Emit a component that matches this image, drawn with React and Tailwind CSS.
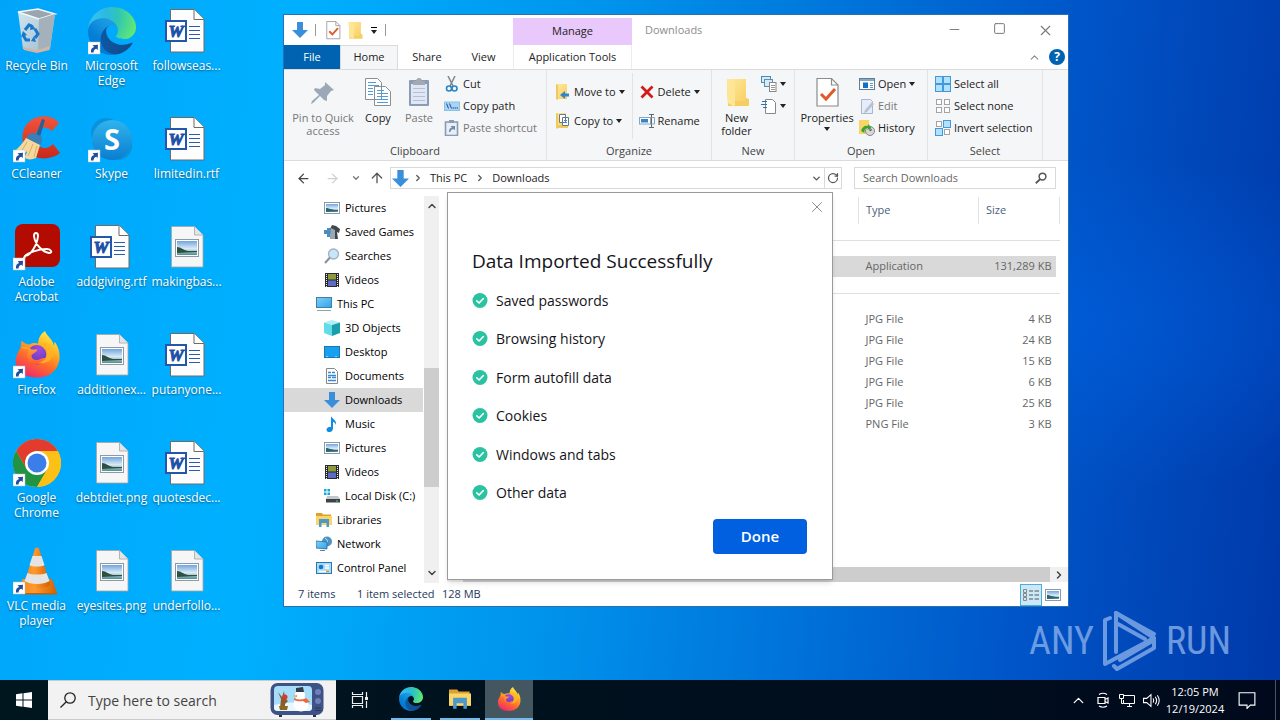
import React from 'react';
import { ChevronDown, ChevronUp, ChevronRight, ArrowLeft, ArrowRight, ArrowUp, RotateCw, Minus, Square, X } from 'lucide-react';

// Gradients shared by all the icons
function Defs() {
  return (
    <svg className="absolute w-0 h-0" aria-hidden="true">
      <defs>
        <linearGradient id="edgeA" x1="60" y1="170" x2="240" y2="170" gradientUnits="userSpaceOnUse">
          <stop offset="0" stopColor="#0c59a4" /><stop offset="1" stopColor="#114a8b" />
        </linearGradient>
        <linearGradient id="edgeB" x1="155" y1="100" x2="45" y2="220" gradientUnits="userSpaceOnUse">
          <stop offset="0" stopColor="#1b9de2" /><stop offset=".3" stopColor="#1595df" /><stop offset=".7" stopColor="#0680d7" /><stop offset="1" stopColor="#0078d4" />
        </linearGradient>
        <radialGradient id="edgeC" cx="30" cy="45" r="240" gradientUnits="userSpaceOnUse">
          <stop offset="0" stopColor="#35c1f1" /><stop offset=".3" stopColor="#2bb9e0" /><stop offset=".55" stopColor="#2fc6b4" /><stop offset="1" stopColor="#66eb6e" />
        </radialGradient>
        <linearGradient id="ffBody" x1=".8" y1="0" x2=".3" y2="1">
          <stop offset="0" stopColor="#fff14f" /><stop offset=".35" stopColor="#ffb01f" /><stop offset=".65" stopColor="#ff6a2b" /><stop offset="1" stopColor="#f0286e" />
        </linearGradient>
        <radialGradient id="ffGlobe" cx=".6" cy=".2" r=".9">
          <stop offset="0" stopColor="#a04be0" /><stop offset="1" stopColor="#5a36b8" />
        </radialGradient>
        <linearGradient id="ffFox" x1="0" y1="0" x2="0" y2="1">
          <stop offset="0" stopColor="#ffa530" /><stop offset="1" stopColor="#ff5b2e" />
        </linearGradient>
        <linearGradient id="skype" x1="0" y1="0" x2="0" y2="1">
          <stop offset="0" stopColor="#2fb4ee" /><stop offset="1" stopColor="#0a7ed0" />
        </linearGradient>
        <linearGradient id="photo" x1="0" y1="0" x2="0" y2="1">
          <stop offset="0" stopColor="#6fa6de" /><stop offset=".55" stopColor="#dbeaf5" /><stop offset="1" stopColor="#4f8c93" />
        </linearGradient>
        <linearGradient id="bin" x1="0" y1="0" x2="1" y2="1">
          <stop offset="0" stopColor="#e8edf0" /><stop offset="1" stopColor="#b4bec6" />
        </linearGradient>
        <linearGradient id="ccRed" x1="0" y1="0" x2="0" y2="1">
          <stop offset="0" stopColor="#f0553c" /><stop offset="1" stopColor="#c8281a" />
        </linearGradient>
        <linearGradient id="cone" x1="0" y1="0" x2="1" y2="0">
          <stop offset="0" stopColor="#f58a1a" /><stop offset=".4" stopColor="#ff9a2e" /><stop offset="1" stopColor="#d45f00" />
        </linearGradient>
        <linearGradient id="folder" x1="0" y1="0" x2="1" y2="1">
          <stop offset="0" stopColor="#ffe9a0" /><stop offset="1" stopColor="#f8cf60" />
        </linearGradient>
        <linearGradient id="screen" x1="0" y1="0" x2="1" y2="1">
          <stop offset="0" stopColor="#7fd0f7" /><stop offset="1" stopColor="#2fa4e8" />
        </linearGradient>
      </defs>
    </svg>
  );
}

function Icon({ size = 16, box = 16, children }) {
  return (
    <svg width={size} height={size} viewBox={`0 0 ${box} ${box}`} fill="none" className="shrink-0" aria-hidden="true">
      {children}
    </svg>
  );
}

const Shortcut = () => (
  <g>
    <rect x="0" y="35" width="12" height="12" fill="#fff" stroke="#b8c4cc" strokeWidth=".5" />
    <path d="M3 45.500c-.4-3.200.8-5 3.200-5.600L4.600 38.200l5.400-.5-.3 5.400-1.500-1.400c-1.700.6-2.600 1.800-2.700 3.800z" fill="#1f4e9a" />
  </g>
);

const RecycleBin = () => (
  <Icon size={48} box={48}>
    <path d="M5 5l20-3 17 5-5 35-13 3-14-3z" fill="url(#bin)" opacity=".9" />
    <path d="M5 5l20-3 17 5-16 5z" fill="#9aa6af" stroke="#f4f7f8" strokeWidth="1.500" />
    <path d="M26 12l16-5-5 34-12 4z" fill="#a4b0ba" />
    <path d="M10 40l14 3 13-4-.5 4L24 46l-13-3z" fill="#d0b6a6" />
    <g stroke="#1878cc" strokeWidth="3">
      <path d="M12 23l4-5 4 2M22 22l3 5-3 4M17 33h-4l-3-5" />
    </g>
    <path d="M18 17l5 5-6 1zM23 35l-5-1 3-5zM8 30l2-6 4 4z" fill="#1878cc" />
  </Icon>
);

const EdgeArt = () => (
  <g>
    <path d="M231.400 190.500c-3.400 1.800-6.900 3.400-10.500 4.700-11.500 4.300-23.600 6.500-35.900 6.500-47.300 0-88.500-32.500-88.500-74.300.1-11.400 6.400-21.900 16.400-27.300-42.800 1.800-53.800 46.400-53.800 72.500 0 73.900 68.100 81.400 82.800 81.400 7.900 0 19.800-2.300 27-4.600l1.300-.4c27.600-9.500 51-28.100 66.600-52.800 1.200-1.900.6-4.300-1.200-5.500-1.300-.8-2.900-.9-4.200-.2z" fill="url(#edgeA)" />
    <path d="M105.700 241.400c-8.900-5.500-16.600-12.800-22.700-21.300-26.300-36-18.400-86.500 17.600-112.800 3.800-2.700 7.700-5.200 11.900-7.200 3.100-1.500 8.400-4.100 15.500-4 10.100.1 19.600 4.900 25.700 13 4 5.400 6.300 11.900 6.400 18.700 0-.2 24.500-79.600-80-79.600-43.900 0-80 41.700-80 78.200-.2 19.300 4 38.500 12.100 56 27.600 58.800 94.800 87.600 156.400 67.100-21.100 6.600-44.100 3.700-62.900-8.100z" fill="url(#edgeB)" />
    <path d="M152.300 148.900c-.8 1-3.300 2.500-3.300 5.700 0 2.600 1.700 5.100 4.700 7.200 14.400 10 41.500 8.700 41.600 8.700 10.700 0 21.100-2.900 30.300-8.300 18.800-11 30.400-31.100 30.400-52.900.3-22.400-8-37.300-11.300-43.900C223.500 23.900 177.700 0 128 0 58 0 1 56.200 0 126.200c.5-36.500 36.800-66 80-66 3.500 0 23.500.3 42 10.100 16.300 8.600 24.900 18.900 30.800 29.200 6.200 10.700 7.300 24.100 7.300 29.500 0 5.300-2.700 13.300-7.800 19.900z" fill="url(#edgeC)" />
  </g>
);

const Edge = () => (
  <Icon size={48} box={48}>
    <g transform="scale(.1875)"><EdgeArt /></g>
    <Shortcut />
  </Icon>
);

const FirefoxArt = () => (
  <g>
    <path d="M8 10c-1 3-1 5-1 7-4 6-6 11-5 17 1 8 9 14 22 14 13 0 23-8 23-22 0-7-3-12-5-15-1 2 0 3-1 4-1-7-7-9-9-15-6 4-7 9-7 13-3-1-7-1-9 1-3 0-6-2-8-4z" fill="url(#ffBody)" />
    <circle cx="23.500" cy="24.500" r="10" fill="url(#ffGlobe)" />
    <path d="M7 17c5-1 9 0 11 2h6c0 3-5 4-6 6 0 3 2 5 5 5 4 0 6-3 9-2-2 6-9 8-14 5-6-3-5-11-3-14-3 0-6-1-8-2z" fill="url(#ffFox)" />
    <path d="M25 13c4-1 9 2 9 8 0 7-4 11-9 12 9 2 16-4 16-12-1-6-5-9-9-9-3 0-5 0-7 1z" fill="#ffb727" opacity=".75" />
  </g>
);

const Firefox = () => (
  <Icon size={48} box={48}>
    <g transform="translate(1 0) scale(.97)"><FirefoxArt /></g>
    <Shortcut />
  </Icon>
);

const CCleaner = () => (
  <Icon size={48} box={48}>
    <path d="M46 8C40 0 26-1 17 6 8 13 7 27 14 36c7 9 23 10 33 2L40 29c-5 5-11 5-15 1-4-5-4-11 0-15 4-4 10-3 14 1z" fill="url(#ccRed)" />
    <path d="M29 4l3 1-6 20-4-2z" fill="#2b5f94" />
    <path d="M20 18l8 3c2 2 1 7-1 9l-14-6c1-3 4-6 7-6z" fill="#3b7eb8" />
    <path d="M13 23l14 7-4 13c-5 2-9 2-12-1 2-2 3-4 3-6-3 4-7 3-12 0 4-4 8-8 11-13z" fill="#f6d89c" />
    <path d="M14 27l-6 10M20 29l-5 12M24 31l-3 11" stroke="#d8ad66" />
    <Shortcut />
  </Icon>
);

const Skype = () => (
  <Icon size={48} box={48}>
    <circle cx="18" cy="18" r="15" fill="#0a92dc" />
    <circle cx="30" cy="31" r="14" fill="#0a92dc" />
    <circle cx="24" cy="25" r="20" fill="url(#skype)" />
    <text x="24" y="35" textAnchor="middle" fontSize="29" fontWeight="700" fontFamily="Open Sans, sans-serif" fill="#fff">S</text>
    <Shortcut />
  </Icon>
);

const Acrobat = () => (
  <Icon size={48} box={48}>
    <rect x="2" y="1" width="45" height="43" rx="8" fill="#b30b00" />
    <path d="M12 33c5 0 12-10 13-20 0-4-4-4-4 0 1 9 9 16 15 17 4 0 2-4-2-4-9 0-19 4-22 7-2 3-1 4 0 0z" stroke="#fff" strokeWidth="2" strokeLinejoin="round" />
    <Shortcut />
  </Icon>
);

const Chrome = () => (
  <Icon size={48} box={48}>
    <circle cx="24" cy="24" r="24" fill="#fbc116" />
    <path d="M3.200 12A24 24 0 0 1 44.800 12H24L13.600 30z" fill="#e33b2e" />
    <path d="M3.200 12A24 24 0 0 0 24 48L34.400 30 24 36 13.600 30z" fill="#229342" />
    <path d="M24 12h20.800A24 24 0 0 1 24 48l10.400-18z" fill="#fbc116" />
    <circle cx="24" cy="24" r="12" fill="#fff" />
    <circle cx="24" cy="24" r="9.500" fill="#3b7de9" />
    <Shortcut />
  </Icon>
);

const Vlc = () => (
  <Icon size={48} box={48}>
    <path d="M9 32h30l5 14H7z" fill="url(#cone)" />
    <path d="M7 46l1 1.500h36V46z" fill="#c65f08" />
    <path d="M22 1.500c1-1.500 3-1.500 4 0l11 36c-3 5-23 5-26 0z" fill="url(#cone)" />
    <path d="M19.500 9h9l3 9c-3 2-12 2-15 0zM14.500 26c5 2 14 2 19 0l3 8c-6 4-19 4-25 0z" fill="#e6e4e2" />
    <Shortcut />
  </Icon>
);

const WordDoc = () => (
  <Icon size={48} box={48}>
    <path d="M7.500 2.500h24l9.500 10v32.500H7.500z" fill="#fdfdfd" stroke="#6e6a68" />
    <path d="M31 2.500v10h10" fill="#fff" stroke="#6e6a68" />
    <path d="M26 19.500h11M26 23.500h11M26 27.500h11M26 31.500h11" stroke="#2b5cad" />
    <rect x="3" y="14" width="20" height="20" fill="#fff" stroke="#2456ac" strokeWidth="2" />
    <text x="13" y="30" textAnchor="middle" fontSize="17" fontWeight="700" fontStyle="italic" fontFamily="Liberation Serif, serif" fill="#1f50a8" stroke="#1f50a8">W</text>
  </Icon>
);

const ImageDoc = () => (
  <Icon size={48} box={48}>
    <path d="M8.500 3.500h23l8.500 8.500v32H8.500z" fill="#f6f6f6" stroke="#a9a5a2" strokeWidth=".8" />
    <path d="M31.500 3.500V12H40" fill="#dfe6ea" stroke="#a9a5a2" strokeWidth=".8" />
    <rect x="12.500" y="16.500" width="23" height="17" fill="#fff" stroke="#8b9aa5" />
    <rect x="14" y="18" width="20" height="14" fill="url(#photo)" />
    <path d="M14 24c4 0 6 3 11 4h9v1c-8 0-14 1-20 1z" fill="#2c5140" />
  </Icon>
);

const desktopItems = [
  { label: 'Recycle Bin', icon: RecycleBin },
  { label: 'CCleaner', icon: CCleaner },
  { label: 'Adobe Acrobat', icon: Acrobat },
  { label: 'Firefox', icon: Firefox },
  { label: 'Google Chrome', icon: Chrome },
  { label: 'VLC media player', icon: Vlc },
  { label: 'Microsoft Edge', icon: Edge },
  { label: 'Skype', icon: Skype },
  { label: 'addgiving.rtf', icon: WordDoc },
  { label: 'additionex...', icon: ImageDoc },
  { label: 'debtdiet.png', icon: ImageDoc },
  { label: 'eyesites.png', icon: ImageDoc },
  { label: 'followseas...', icon: WordDoc },
  { label: 'limitedin.rtf', icon: WordDoc },
  { label: 'makingbas...', icon: ImageDoc },
  { label: 'putanyone...', icon: WordDoc },
  { label: 'quotesdec...', icon: WordDoc },
  { label: 'underfollo...', icon: ImageDoc },
];

function Desktop() {
  return (
    <div className="grid grid-flow-col grid-rows-[repeat(6,108px)] auto-cols-[75px] w-fit">
      {desktopItems.map(({ label, icon: Art }) => (
        <button key={label} className="flex flex-col items-center pt-[7px] pr-[2px] gap-[3px]">
          <Art />
          <span className="text-[12px] leading-[15px] text-white text-center [text-shadow:0_1px_2px_rgba(0,0,0,0.5)]">{label}</span>
        </button>
      ))}
    </div>
  );
}

/* small 16px icons */
const DownArrow = ({ size }) => (
  <Icon size={size}>
    <path d="M5 0h6v8h5l-8 8-8-8h5z" fill="#3a8fdb" />
  </Icon>
);
const CheckDoc = ({ size = 16 }) => (
  <Icon size={size} box={32}>
    <path d="M6 2.500h14.500l6.500 6.500v21H6z" fill="#fff" stroke="#8c8c8c" strokeWidth="1.200" />
    <path d="M20.500 2.500V9H27" stroke="#8c8c8c" strokeWidth="1.200" />
    <path d="M10 18l5 5 9-10" stroke="#e0592a" strokeWidth="3" />
  </Icon>
);
const Folder = ({ size = 16 }) => (
  <Icon size={size} box={32}>
    <path d="M6 3h19v19l3 1v7H7z" fill="#f5cd62" />
    <path d="M6 3h19v22H14v4l-7-3z" fill="url(#folder)" />
    <path d="M6 3l8 4v24l-7-4z" fill="#ffe596" />
  </Icon>
);
const PinArt = () => (
  <Icon size={32} box={32}>
    <path d="M18 6l9 8-3 1-4 5v5l-3-1-4-4-7 7-2 1 1-3 7-6-5-5 1-2 5 1 5-4z" fill="#9ba8b8" />
  </Icon>
);
const CopyArt = () => (
  <Icon size={32} box={32}>
    <path d="M3.500 2.500h12l4 4v17h-16zM12.500 10.500h11l5 5v14h-16z" fill="#fff" stroke="#8a8f94" />
    <path d="M6 6.500h8M6 9.500h11M6 12.500h5M6 15.500h5M6 18.500h5M15 14.500h7M15 17.500h11M15 20.500h11M15 23.500h11M15 26.500h11" stroke="#4f9be0" />
  </Icon>
);
const PasteArt = () => (
  <Icon size={32} box={32}>
    <rect x="6" y="4" width="20" height="26" rx="1" fill="#8c9bb5" />
    <rect x="8" y="8" width="16" height="20" fill="#dfe7f5" />
    <path d="M10 5h3c0-4 6-4 6 0h3v4H10z" fill="#a2a9b5" />
    <path d="M10 12.500h12M10 16.500h12M10 20.500h12M10 24.500h12" stroke="#b3c0d8" />
  </Icon>
);
const CutArt = () => (
  <Icon>
    <path d="M4 0l5 10M11 0L6 10" stroke="#7d868e" strokeWidth="1.500" />
    <circle cx="5" cy="12.500" r="2.500" stroke="#2a86c8" strokeWidth="1.600" />
    <circle cx="10.500" cy="12.500" r="2.500" stroke="#2a86c8" strokeWidth="1.600" />
  </Icon>
);
const PathArt = () => (
  <Icon>
    <rect x=".5" y="4" width="15" height="8.500" fill="#a9d4f5" stroke="#8cbfe6" />
    <path d="M2.500 5.500l2 5M5.500 5.500l2 5M8.500 10h1.500M10.500 10h1.500M12.500 10H14" stroke="#1b4f8a" />
  </Icon>
);
const PasteShortcutArt = () => (
  <Icon>
    <rect x="1.500" y="2" width="12" height="13.500" fill="#e8eef8" stroke="#8c9bb5" strokeWidth="1.600" />
    <rect x="5" y="0" width="5" height="3" fill="#8c9bb5" />
    <path d="M5 12c0-3 1-4 3-4.500L6.500 6H11v4.500L9.500 9C7.500 9.500 6.500 10 6.500 12z" fill="#7488a8" />
  </Icon>
);
const MoveArt = () => (
  <Icon>
    <path d="M1 0h11v15H1z" fill="url(#folder)" />
    <path d="M1 0l2 1v15l-2-1z" fill="#f0c860" />
    <path d="M14 9.500h-4V7l-5 4 5 4v-2.500h4z" fill="#2f86c8" />
  </Icon>
);
const CopyToArt = () => (
  <Icon>
    <path d="M1 0h10v15H1z" fill="url(#folder)" />
    <path d="M1 0l2 1v15l-2-1zM3 12h10v3H3z" fill="#f0c860" />
    <path d="M4.500 1.500h6v8h-6zM7.500 4.500h6v8h-6z" fill="#fff" stroke="#62788c" />
    <path d="M9 7.500h3M9 9.500h3" stroke="#3f8ad0" />
  </Icon>
);
const DeleteArt = () => (
  <Icon>
    <path d="M2.500 2.500l11 11M13.500 2.500l-11 11" stroke="#d31a1a" strokeWidth="2.800" />
  </Icon>
);
const RenameArt = () => (
  <Icon>
    <rect x=".5" y="4.500" width="11" height="6.500" fill="#fff" stroke="#7fa8c8" />
    <rect x="2" y="6" width="7" height="3.500" fill="#3a84c4" />
    <path d="M10 1.500h5M10 14.500h5M12.500 1.500v13" stroke="#666" />
    <path d="M12.500 4.500h3v6.500h-3" stroke="#7fa8c8" />
  </Icon>
);
const EasyAccessArt = () => (
  <Icon>
    <rect x=".5" y=".5" width="9" height="6" fill="#d6ebf8" stroke="#4a8cb8" />
    <rect x="3.500" y="3.500" width="8" height="7" fill="#d6ebf8" stroke="#5f8ea8" />
    <rect x="8.500" y="6.500" width="6.500" height="9" fill="#fff" stroke="#888" />
    <path d="M10 9.500h4M10 11.500h4M10 13.500h4" stroke="#999" />
  </Icon>
);
const NewItemArt = () => (
  <Icon>
    <path d="M4.500 1.500h7l3 3v11h-10z" fill="#fff" stroke="#888" />
    <path d="M1 3.500h5M0 6.500h6M2 9.500h4" stroke="#2f6fb4" />
  </Icon>
);
const OpenArt = () => (
  <Icon>
    <rect x=".5" y="2.500" width="15" height="11" fill="#fff" stroke="#5f7f98" />
    <path d="M1 3h14v2H1z" fill="#8aa8bc" />
    <rect x="4" y="6.500" width="5" height="5.500" fill="#1272c8" />
    <path d="M11 7.500h3M11 9.500h3M11 11.500h3" stroke="#5a98d0" />
  </Icon>
);
const EditArt = () => (
  <Icon>
    <path d="M2.500 1.500h9l2 2v12h-11z" fill="#e6edf8" stroke="#a9b7cc" />
    <path d="M13 4l2 2-7 8-3 1 1-3z" fill="#b6c2d6" />
  </Icon>
);
const HistoryArt = () => (
  <Icon>
    <path d="M0 0h10v14H0z" fill="#f8d566" />
    <circle cx="11" cy="11" r="4.500" fill="#d8d8d8" stroke="#888" />
    <path d="M11 8v3l2-1.500" stroke="#555" />
    <path d="M2 11c1-4 4-6 7-5l.5-2 3 4-4 2 .3-2C6 8 5 10 5.500 13z" fill="#3aa335" />
  </Icon>
);
const tileColors = { on: ['#b5e0fb', '#3d9ade'], off: ['#fff', '#a4a4a4'] };
const Tiles = ({ pattern }) => (
  <Icon>
    {pattern.map((state, i) => (
      <rect
        key={i}
        x={(i % 2) * 8 + (state === 'on' ? 0.5 : 1.5)}
        y={Math.floor(i / 2) * 8 + (state === 'on' ? 0.5 : 1.5)}
        width={state === 'on' ? 7 : 5}
        height={state === 'on' ? 7 : 5}
        fill={tileColors[state][0]}
        stroke={tileColors[state][1]}
      />
    ))}
  </Icon>
);
const Caret = () => (
  <svg width="6" height="4" viewBox="0 0 6 4" className="shrink-0" aria-hidden="true"><path d="M0 0h6L3 4z" fill="#222" /></svg>
);

const PicturesArt = () => (
  <Icon>
    <rect x=".5" y="2.500" width="15" height="11" fill="#fff" stroke="#8a9aa8" />
    <rect x="2" y="4" width="12" height="8" fill="url(#photo)" />
    <path d="M2 8c3 0 5 2 12 2v1L2 12z" fill="#2f6470" />
  </Icon>
);
const GamesArt = () => (
  <Icon>
    <path d="M0 6h3V4h3v3h2v3H6v3H3v-3H0z" fill="#4a8cc4" />
    <path d="M8 1l4 1 4 3-1 4-2-1 1 7H6l1-7-1-3z" fill="#3f464e" />
    <path d="M7 4l4 2v9H6z" fill="#9aa8b4" />
  </Icon>
);
const SearchesArt = () => (
  <Icon>
    <circle cx="9.500" cy="6" r="5" fill="#c8e6f8" stroke="#9fb2c0" strokeWidth="1.300" />
    <path d="M6 9.500L1 15" stroke="#8a8f98" strokeWidth="2" />
  </Icon>
);
const VideosArt = () => (
  <Icon>
    <rect x="1" y="1" width="14" height="14" fill="#2b2b2b" />
    <rect x="4" y="2" width="8" height="5.500" fill="#8c9a3a" />
    <rect x="4" y="8.500" width="8" height="5.500" fill="#5a6cc8" />
    <path d="M2.500 2v13M13.500 2v13" stroke="#eee" strokeDasharray="1 1" />
  </Icon>
);
const PcArt = () => (
  <Icon>
    <rect x=".5" y="1.500" width="15" height="10" fill="url(#screen)" stroke="#3f7ea8" />
    <path d="M1 14.500h14" stroke="#8aa" />
  </Icon>
);
const CubeArt = () => (
  <Icon>
    <path d="M8 0l8 2.500L8 5 0 2.500z" fill="#b0f0f4" />
    <path d="M0 2.500L8 5v11l-8-3z" fill="#62dce6" />
    <path d="M16 2.500L8 5v11l8-3z" fill="#1a9eae" />
  </Icon>
);
const DesktopArt = () => (
  <Icon>
    <rect x=".5" y="2.500" width="15" height="11" fill="#18a0f0" stroke="#1778b8" />
    <path d="M2 12.500h12" stroke="#7fd0f8" strokeDasharray="2 7" />
  </Icon>
);
const DocumentsArt = () => (
  <Icon>
    <path d="M2.500.500h8l3 3v12h-11z" fill="#fff" stroke="#888" />
    <path d="M4 4.500h3M8 4.500h3M4 7.500h8M4 9.500h3M8 9.500h4M4 12.500h8" stroke="#3a8ad0" strokeWidth="1.500" />
  </Icon>
);
const MusicArt = () => (
  <Icon>
    <path d="M7 0c1 3 6 4 5 9-.5-2-2-3-3-3v6c0 3-2 4.500-4.500 4C1.500 15 2 11.500 5.500 11H7z" fill="#0f8be0" />
  </Icon>
);
const DiskArt = () => (
  <Icon>
    <path d="M0 1h2.500v2.500H0zM3.500 1H6v2.500H3.500zM0 4.500h2.500V7H0zM3.500 4.500H6V7H3.500z" fill="#14a8d8" />
    <path d="M3 8h11l2 3H2z" fill="#c4c8cc" />
    <path d="M2 11h14v3.500H2z" fill="#3d4246" />
    <path d="M12 13h2" stroke="#5dd068" />
  </Icon>
);
const LibrariesArt = ({ size = 16 }) => (
  <Icon size={size}>
    <path d="M0 1h6l1 1.500h8V5H0z" fill="#e0a030" />
    <path d="M0 4h16v9H0z" fill="#fbd667" />
    <path d="M3 7h10v8h-2.500v-4h-5v4H3z" fill="#4a98cc" />
  </Icon>
);
const NetworkArt = () => (
  <Icon>
    <circle cx="11" cy="5.500" r="5" fill="#4a94c8" />
    <path d="M9 2c2 1 3 3 2 5" stroke="#b8def2" />
    <path d="M0 5l11 1v7L0 12z" fill="url(#screen)" stroke="#2a6a98" strokeWidth=".8" />
    <path d="M4 14.500h5" stroke="#778" />
  </Icon>
);
const ControlArt = () => (
  <Icon>
    <rect x=".5" y="2.500" width="15" height="11" fill="#a8dcf8" stroke="#2a78b0" />
    <circle cx="5" cy="7" r="2.300" fill="#1878c8" />
    <path d="M9 5.500h4M9 8h4M3 11.500h10" stroke="#fff" strokeWidth="1.300" />
    <path d="M10 11.500h3" stroke="#e89028" strokeWidth="1.600" />
  </Icon>
);

function BigButton({ icon, label, caret, className = '' }) {
  return (
    <button className={`flex flex-col items-center gap-[3px] pt-[3px] leading-[13px] ${className}`}>
      {icon}
      <span>{label}</span>
      {caret && <Caret />}
    </button>
  );
}

function SmallButton({ icon, label, name, caret, className = 'h-[22px]' }) {
  return (
    <button aria-label={name} className={`flex items-center gap-[3px] whitespace-nowrap ${className}`}>
      {icon}
      {label && <span>{label}</span>}
      {caret && <Caret />}
    </button>
  );
}

function RibbonGroup({ title, className, children }) {
  return (
    <section className={`flex flex-col pt-[3px] shrink-0 border-r border-[#e2e3e4] ${className}`}>
      <div className="flex flex-1">{children}</div>
      <h3 className="text-center leading-[16px] pb-px text-[#444]">{title}</h3>
    </section>
  );
}

function Ribbon() {
  return (
    <div className="flex h-[92px] bg-[#f5f6f7] border-y border-[#dadbdc] text-[#222] text-[11px]">
      <RibbonGroup title="Clipboard" className="w-[263px]">
        <BigButton icon={<PinArt />} label={<>Pin to Quick<br />access</>} className="w-[78px] text-[#777]" />
        <BigButton icon={<CopyArt />} label="Copy" className="w-[32px]" />
        <BigButton icon={<PasteArt />} label="Paste" className="w-[50px] text-[#777]" />
        <div className="flex flex-col">
          <SmallButton icon={<CutArt />} label="Cut" />
          <SmallButton icon={<PathArt />} label="Copy path" />
          <SmallButton icon={<PasteShortcutArt />} label="Paste shortcut" className="h-[22px] text-[#777]" />
        </div>
      </RibbonGroup>
      <RibbonGroup title="Organize" className="w-[165px]">
        <div className="flex flex-col pt-1 pl-2 pr-[7px] border-r border-[#e2e3e4] mb-1">
          <SmallButton icon={<MoveArt />} label="Move to" caret className="h-[30px]" />
          <SmallButton icon={<CopyToArt />} label="Copy to" caret className="h-[28px]" />
        </div>
        <div className="flex flex-col pt-1 pl-[6px]">
          <SmallButton icon={<DeleteArt />} label="Delete" caret className="h-[30px]" />
          <SmallButton icon={<RenameArt />} label="Rename" className="h-[28px]" />
        </div>
      </RibbonGroup>
      <RibbonGroup title="New" className="w-[83px]">
        <BigButton icon={<Folder size={32} />} label={<>New<br />folder</>} className="w-[49px]" />
        <div className="flex flex-col">
          <SmallButton icon={<EasyAccessArt />} name="Easy access" caret />
          <SmallButton icon={<NewItemArt />} name="New item" caret />
        </div>
      </RibbonGroup>
      <RibbonGroup title="Open" className="w-[133px]">
        <BigButton icon={<CheckDoc size={32} />} label="Properties" caret className="w-[64px]" />
        <div className="flex flex-col">
          <SmallButton icon={<OpenArt />} label="Open" caret />
          <SmallButton icon={<EditArt />} label="Edit" className="h-[22px] text-[#777]" />
          <SmallButton icon={<HistoryArt />} label="History" />
        </div>
      </RibbonGroup>
      <RibbonGroup title="Select" className="w-[115px]">
        <div className="flex flex-col pl-[7px]">
          <SmallButton icon={<Tiles pattern={['on', 'on', 'on', 'on']} />} label="Select all" />
          <SmallButton icon={<Tiles pattern={['off', 'off', 'off', 'off']} />} label="Select none" />
          <SmallButton icon={<Tiles pattern={['off', 'on', 'on', 'off']} />} label="Invert selection" />
        </div>
      </RibbonGroup>
    </div>
  );
}

function TitleBar() {
  return (
    <header className="flex text-[11px] h-[54px]">
      <div className="flex flex-col w-[229px]">
        <div className="flex items-center h-[30px] pl-2">
          <DownArrow />
          <span className="w-px h-3 bg-[#999] mx-[7px]" />
          <CheckDoc size={20} />
          <span className="w-[2px]" />
          <Folder size={20} />
          <button aria-label="Customize" className="ml-[6px] flex flex-col items-center gap-[2px]">
            <span className="w-[6px] h-px bg-black" />
            <Caret />
          </button>
          <span className="w-px h-3 bg-[#999] ml-[8px]" />
        </div>
        <nav className="flex h-6 text-[#222]">
          <button className="w-14 bg-[#0063b1] text-white">File</button>
          <button className="w-[58px] bg-[#f5f6f7] border border-b-0 border-[#dadbdc]">Home</button>
          <button className="w-[58px]">Share</button>
          <button className="w-[55px]">View</button>
        </nav>
      </div>
      <div className="flex flex-col w-[119px] pt-[3px] text-[#222]">
        <div className="bg-[#e9c8fb] h-[27px] flex items-center justify-center">Manage</div>
        <button className="h-6 border-x border-[#ececec] whitespace-nowrap">Application Tools</button>
      </div>
      <div className="flex-1 flex flex-col">
        <div className="flex items-center justify-between h-[30px] pl-[13px]">
          <span className="text-[#8d8d8d]">Downloads</span>
          <div className="flex text-[#777]">
            <button aria-label="Minimize" className="w-[45px] flex justify-center"><Minus size={15} strokeWidth={1.5} /></button>
            <button aria-label="Maximize" className="w-[45px] flex justify-center"><Square size={13} strokeWidth={1.8} /></button>
            <button aria-label="Close" className="w-[46px] flex justify-center"><X size={17} strokeWidth={1.5} /></button>
          </div>
        </div>
        <div className="flex items-center justify-end h-6 gap-2 pr-[3px]">
          <button aria-label="Minimize the ribbon"><ChevronUp size={13} color="#888" /></button>
          <button aria-label="Help" className="w-4 h-4 rounded-full bg-[#0063b1] text-white text-[12px] leading-4 font-bold">?</button>
        </div>
      </div>
    </header>
  );
}

function AddressBar() {
  return (
    <div className="flex items-center h-[33px] text-[11px] text-[#222] pr-3 pl-3 pt-px">
      <button aria-label="Back"><ArrowLeft size={15} color="#444" /></button>
      <button aria-label="Forward" className="ml-[14px]"><ArrowRight size={15} color="#d0d0d0" /></button>
      <button aria-label="Recent locations" className="ml-[11px]"><ChevronDown size={10} color="#777" strokeWidth={3} /></button>
      <button aria-label="Up" className="ml-[8px]"><ArrowUp size={16} color="#555" /></button>
      <div className="flex items-center flex-1 h-[22px] ml-[5px] border border-[#d9d9d9]">
        <span className="ml-px"><DownArrow size={17} /></span>
        <ChevronRight size={10} className="ml-[4px]" color="#555" strokeWidth={3} />
        <button className="ml-[7px]">This PC</button>
        <ChevronRight size={10} className="ml-[8px]" color="#555" strokeWidth={3} />
        <button className="ml-[7px]">Downloads</button>
        <button aria-label="Previous locations" className="ml-auto mr-[2px]"><ChevronDown size={11} color="#555" strokeWidth={3} /></button>
        <button aria-label="Refresh" className="w-[17px] h-full flex items-center justify-center border-l border-[#d9d9d9]"><RotateCw size={12} color="#555" strokeWidth={2.5} /></button>
      </div>
      <label className="flex items-center w-[202px] h-[22px] ml-3 px-2 border border-[#d9d9d9]">
        <input aria-label="Search Downloads" placeholder="Search Downloads" className="flex-1 min-w-0 outline-none placeholder:text-[#666]" />
        <Icon size={12}>
          <circle cx="10" cy="6" r="4.500" stroke="#555" strokeWidth="2" />
          <path d="M7 9.500L1 15" stroke="#555" strokeWidth="2.500" />
        </Icon>
      </label>
    </div>
  );
}

const treeItems = [
  { label: 'Pictures', icon: PicturesArt, nested: true },
  { label: 'Saved Games', icon: GamesArt, nested: true },
  { label: 'Searches', icon: SearchesArt, nested: true },
  { label: 'Videos', icon: VideosArt, nested: true },
  { label: 'This PC', icon: PcArt },
  { label: '3D Objects', icon: CubeArt, nested: true },
  { label: 'Desktop', icon: DesktopArt, nested: true },
  { label: 'Documents', icon: DocumentsArt, nested: true },
  { label: 'Downloads', icon: DownArrow, nested: true, active: true },
  { label: 'Music', icon: MusicArt, nested: true },
  { label: 'Pictures', icon: PicturesArt, nested: true },
  { label: 'Videos', icon: VideosArt, nested: true },
  { label: 'Local Disk (C:)', icon: DiskArt, nested: true },
  { label: 'Libraries', icon: LibrariesArt },
  { label: 'Network', icon: NetworkArt },
  { label: 'Control Panel', icon: ControlArt },
];

function Sidebar() {
  return (
    <aside className="flex text-[11px] text-black pt-[2px]">
      <ul className="w-[139px]">
        {treeItems.map(({ label, icon: Art, nested, active }, i) => (
          <li key={i} className={active ? 'bg-[#d9d9d9]' : ''}>
            <button className={`flex items-center gap-[5px] h-6 whitespace-nowrap ${nested ? 'pl-10' : 'pl-8'}`}>
              <Art />
              {label}
            </button>
          </li>
        ))}
      </ul>
      <div className="flex flex-col items-center w-[15px] ml-px bg-[#f0f0f0]">
        <ChevronUp size={12} color="#444" strokeWidth={3} className="mt-1" />
        <div className="w-full h-[119px] mt-auto mb-[80px] bg-[#cdcdcd]" />
        <ChevronDown size={12} color="#444" strokeWidth={3} className="mb-1" />
      </div>
    </aside>
  );
}

const files = [
  { type: 'JPG File', size: '4 KB' },
  { type: 'JPG File', size: '24 KB' },
  { type: 'JPG File', size: '15 KB' },
  { type: 'JPG File', size: '6 KB' },
  { type: 'JPG File', size: '25 KB' },
  { type: 'PNG File', size: '3 KB' },
];

function GroupLine() {
  return (
    <tr className="h-8">
      <td colSpan={4}><div className="h-px bg-[#dfdfdf]" /></td>
    </tr>
  );
}

function FileRow({ file, selected }) {
  const cell = selected ? 'bg-[#d9d9d9]' : '';
  return (
    <tr className="h-[21px]">
      <td className={cell} />
      <td className={`pl-[7px] ${cell}`}>{file.type}</td>
      <td className={`text-right pr-1 ${cell}`}>{file.size}</td>
      <td />
    </tr>
  );
}

function FileList() {
  return (
    <main className="flex-1 flex flex-col justify-between pl-2 pt-[3px]">
      <div className="pr-2">
        <table className="w-full table-fixed border-collapse text-[11px] text-[#666]">
          <colgroup>
            <col />
            <col className="w-[120px]" />
            <col className="w-[77px]" />
            <col className="w-[4px]" />
          </colgroup>
          <thead>
            <tr className="h-[27px] text-left text-[#4c607a]">
              <td />
              <th className="font-normal pl-[7px] border-l border-[#e2e2e2]">Type</th>
              <th colSpan={2} className="font-normal pl-[7px] border-x border-[#e2e2e2]">Size</th>
            </tr>
          </thead>
          <tbody>
            <GroupLine />
            <FileRow file={{ type: 'Application', size: '131,289 KB' }} selected />
            <GroupLine />
            {files.map((file, i) => <FileRow key={i} file={file} />)}
          </tbody>
        </table>
      </div>
      <div className="flex items-center h-[15px] mb-px bg-[#f0f0f0]">
        <div className="flex-1 h-full ml-4 bg-[#cdcdcd]" />
        <ChevronRight size={12} color="#444" strokeWidth={3} className="mx-[3px]" />
      </div>
    </main>
  );
}

function StatusBar() {
  return (
    <footer className="flex items-center h-[23px] pl-[14px] text-[11px] text-[#1e395b]">
      <span className="w-[59px]">7 items</span>
      <span className="w-[85px]">1 item selected</span>
      <span>128 MB</span>
      <div className="ml-auto flex">
        <button aria-label="Details" className="w-[22px] h-[22px] flex items-center justify-center bg-[#cce8f8] border border-[#4aaed8]">
          <Icon>
            <path d="M.5 2.500h3v3h-3zM.5 6.500h3v3h-3zM.5 10.500h3v3h-3z" stroke="#888" />
            <path d="M6 4h4M11.500 4H16M6 8h4M11.500 8H16M6 12h4M11.500 12H16" stroke="#555" />
          </Icon>
        </button>
        <button aria-label="Large icons" className="w-[22px] h-[22px] flex items-center justify-center mr-[4px]">
          <PicturesArt />
        </button>
      </div>
    </footer>
  );
}

function Explorer() {
  return (
    <section className="absolute left-[283px] top-[14px] w-[786px] border border-[#2a6fae] bg-white">
      <TitleBar />
      <Ribbon />
      <AddressBar />
      <div className="flex h-[389px]">
        <Sidebar />
        <FileList />
      </div>
      <StatusBar />
    </section>
  );
}

const imported = ['Saved passwords', 'Browsing history', 'Form autofill data', 'Cookies', 'Windows and tabs', 'Other data'];

function ImportDialog() {
  return (
    <section role="dialog" aria-labelledby="import-title" className="absolute left-[447px] top-[192px] w-[386px] h-[388px] bg-white border border-[#9a9a9a] shadow-md flex flex-col text-[#15141a]">
      <button aria-label="Close" className="self-end mr-[6px] mt-[5px]"><X size={18} color="#888" strokeWidth={1.3} /></button>
      <div className="flex-1 flex flex-col pl-6 pr-[25px] pb-[25px]">
        <h1 id="import-title" className="mt-[31px] text-[19px] leading-7">Data Imported Successfully</h1>
        <ul className="mt-[14px] h-[216px] flex flex-col justify-between text-[14px] leading-6">
          {imported.map((item) => (
            <li key={item} className="flex items-center gap-2">
              <Icon>
                <circle cx="8" cy="7.500" r="7.500" fill="#2ac3a2" />
                <path d="M4.800 7.800l2.300 2.200 4.300-4.500" stroke="#fff" strokeWidth="1.600" strokeLinecap="round" strokeLinejoin="round" />
              </Icon>
              {item}
            </li>
          ))}
        </ul>
        <button className="mt-auto self-end w-[94px] h-[35px] rounded bg-[#0060df] text-white text-[15px] font-semibold">Done</button>
      </div>
    </section>
  );
}

function Watermark() {
  return (
    <div className="absolute right-[49px] bottom-[48px] flex items-center gap-[8px] text-[#86aeea] opacity-80 font-['Roboto_Condensed','Roboto',sans-serif] text-[38px] leading-none">
      <span>ANY</span>
      <svg width="56" height="62" viewBox="0 0 56 62" fill="none" stroke="currentColor" strokeWidth="4" strokeLinejoin="round" strokeLinecap="round" aria-hidden="true">
        <path d="M8 8L3 10v44l49-26L14 3v39" />
        <path d="M14 3l38 21M16 14l27 15M12 56l3 3 37-21v-8L18 50" />
      </svg>
      <span>RUN</span>
    </div>
  );
}

const SnowmanTv = () => (
  <svg width="54" height="36" viewBox="0 0 54 36" aria-hidden="true">
    <rect x="9" y="31" width="3" height="4" fill="#28304c" />
    <rect x="43" y="31" width="3" height="4" fill="#28304c" />
    <rect x=".5" y="1" width="53" height="32" rx="7" fill="#3f5285" />
    <rect x="4" y="4" width="38" height="25" rx="4" fill="#a5def8" />
    <path d="M4 23q18-5 38 0v3q0 3-4 3H8q-4 0-4-3z" fill="#e9f6fd" />
    <circle cx="31" cy="22" r="7.500" fill="#fff" />
    <circle cx="30" cy="13" r="5" fill="#fff" />
    <path d="M26 6l7-1 1 5h-8z" fill="#333c50" />
    <path d="M24 16q6 3 12 0l4 4-4 1-3-2q-5 1-9-1z" fill="#f0663a" />
    <path d="M27 13l-4 1 4 1z" fill="#f08a2a" />
    <path d="M10 26l1-9-3-7 4 5 2-6 1 7 3 3-3 3v5z" fill="#8c5a2c" />
    <circle cx="15" cy="15" r="2.500" fill="#d63a30" />
    <path d="M9 24h9l-1 4h-7z" fill="#8a6a20" />
    <circle cx="48" cy="10" r="3" fill="#6d80b8" />
    <circle cx="48" cy="19" r="3" fill="#6d80b8" />
    <path d="M45 26h6M45 28.500h6" stroke="#2a365c" />
  </svg>
);

function Taskbar() {
  return (
    <footer className="relative flex h-10 bg-gradient-to-r from-[#00161f] to-[#000a1c] text-white">
      <button aria-label="Start" className="w-12 flex items-center justify-center">
        <Icon><path d="M0 2.300l6.500-1v6.200H0zM7.500 1.200L16 0v7.500H7.500zM0 8.500h6.500v6.200L0 13.700zM7.500 8.500H16V16l-8.500-1.200z" fill="#fff" /></Icon>
      </button>
      <label className="flex items-center w-72 pl-[12px] pr-3 gap-3 bg-[#f2f2f2] border-y border-[#c8ccce]">
        <Icon>
          <circle cx="10" cy="6" r="5.200" stroke="#222" strokeWidth="1.300" />
          <path d="M6.300 9.700L.5 15.500" stroke="#222" strokeWidth="1.300" />
        </Icon>
        <input aria-label="Type here to search" placeholder="Type here to search" className="flex-1 min-w-0 text-[14px] outline-none placeholder:text-[#444]" />
        <SnowmanTv />
      </label>
      <button aria-label="Task View" className="w-12 flex items-center justify-center">
        <Icon size={18} box={18}>
          <path d="M1.500 1v2.500h10V1M1.500 17v-2.500h10V17M1.500 5.500h10v7h-10zM15.500 1v5M15.500 10v7" stroke="#eee" strokeWidth="1.200" />
          <path d="M14 6h3v3h-3z" fill="#eee" />
        </Icon>
      </button>
      <div className="flex gap-[5px] pl-[7px]">
        <button aria-label="Microsoft Edge" className="w-10 flex items-center justify-center border-b-2 border-[#76b9ed]">
          <Icon size={24} box={256}><EdgeArt /></Icon>
        </button>
        <button aria-label="File Explorer" className="w-10 ml-1 flex items-center justify-center border-b-2 border-[#76b9ed]">
          <LibrariesArt size={22} />
        </button>
        <button aria-label="Firefox" className="w-12 flex items-center justify-center bg-[#44565f] border-b-2 border-[#76b9ed]">
          <Icon size={24} box={48}><FirefoxArt /></Icon>
        </button>
      </div>
      <div className="ml-auto flex items-center">
        <button aria-label="Show hidden icons"><ChevronUp size={17} strokeWidth={1.8} /></button>
        <button aria-label="Meet Now" className="ml-[8px]">
          <Icon><path d="M3 5.500h7v6H3zM10 7.500l3-1.500v5l-3-1.500M4 2.500q4-2.500 8 0M4 14q4 2.500 8 0" stroke="#fff" strokeWidth="1.200" /></Icon>
        </button>
        <button aria-label="Network" className="ml-[8px]">
          <Icon><path d="M5 3.500h10.500v8H4.500V8M.5 2.500h4v4h-4zM2.500 6.500v5h2M8 14.500h5M10.500 11.500v3" stroke="#fff" /></Icon>
        </button>
        <button aria-label="Volume" className="ml-[8px]">
          <Icon size={17}><path d="M.5 6h3l4-3.500v11L3.500 10h-3zM9.500 6q1 2 0 4M11.500 4.500q2.500 3.500 0 7M13.500 3q3.500 5 0 10" stroke="#fff" /></Icon>
        </button>
        <time className="w-[62px] ml-[4px] flex flex-col text-center text-[11px] leading-[17px] whitespace-nowrap">
          <span>12:05 PM</span>
          <span>12/19/2024</span>
        </time>
        <button aria-label="Notifications" className="ml-[3px] w-[36px] flex justify-center">
          <Icon size={18}><path d="M1 1.500h14v11h-4l-3 3v-3H1z" stroke="#fff" /></Icon>
        </button>
        <span className="w-px h-10 bg-[#4a5468] ml-[10px] mr-[4px]" />
      </div>
    </footer>
  );
}

export default function App() {
  return (
    <div className="relative h-screen min-h-[720px] flex flex-col overflow-hidden bg-[radial-gradient(ellipse_at_82%_45%,rgba(0,100,230,0.5),transparent_30%),linear-gradient(96deg,#00a5fa_0%,#00b0ff_22%,#0093ec_45%,#0055c8_80%,#0038a8_100%)] font-['Open_Sans','Noto_Sans',sans-serif]">
      <Defs />
      <div className="flex-1">
        <Desktop />
        <Watermark />
        <Explorer />
        <ImportDialog />
      </div>
      <Taskbar />
    </div>
  );
}
